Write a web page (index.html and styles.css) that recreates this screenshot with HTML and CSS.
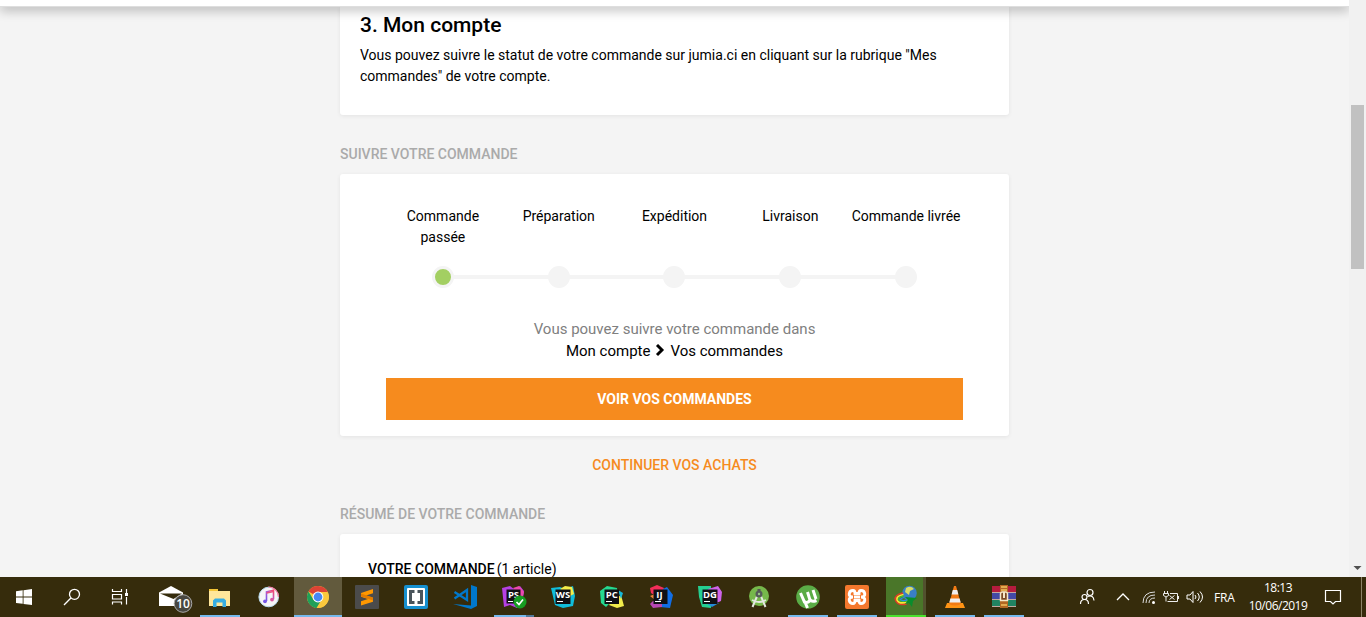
FILE: index.html
```html
<!DOCTYPE html>
<html lang="fr">
<head>
<meta charset="utf-8">
<title>Mon compte</title>
<link rel="stylesheet" href="styles.css">
</head>
<body>
<div class="screen">
  <div class="browser">
    <div class="page">
      <header class="topbar"></header>
      <main class="content">
        <section class="card account">
          <h2>3. Mon compte</h2>
          <p>Vous pouvez suivre le statut de votre commande sur jumia.ci en cliquant sur la rubrique "Mes<br>commandes" de votre compte.</p>
        </section>
        <h3 class="section-title">SUIVRE VOTRE COMMANDE</h3>
        <section class="card tracking">
          <ol class="steps">
            <li class="step active"><span class="label">Commande<br>passée</span><span class="dot"></span></li>
            <li class="step"><span class="label">Préparation</span><span class="dot"></span></li>
            <li class="step"><span class="label">Expédition</span><span class="dot"></span></li>
            <li class="step"><span class="label">Livraison</span><span class="dot"></span></li>
            <li class="step last"><span class="label">Commande livrée</span><span class="dot"></span></li>
          </ol>
          <p class="hint">Vous pouvez suivre votre commande dans</p>
          <p class="crumbs"><span>Mon compte</span><svg width="10" height="14" viewBox="0 0 10 14"><path d="M2 1l5 5-5 5" fill="none" stroke="#000" stroke-width="2.900"/></svg><span>Vos commandes</span></p>
          <a class="button">VOIR VOS COMMANDES</a>
        </section>
        <a class="continue">CONTINUER VOS ACHATS</a>
        <h3 class="section-title summary-title">RÉSUMÉ DE VOTRE COMMANDE</h3>
        <section class="card summary"><b>VOTRE COMMANDE</b><span>(1 article)</span></section>
      </main>
    </div>
    <div class="scrollbar"><div class="thumb"></div><svg class="arrow" width="17" height="17" viewBox="0 0 17 17"><path d="M4.500 6h8l-4 4z" fill="#505050"/></svg></div>
  </div>

  <footer class="taskbar">
    <div class="system">
      <div class="cell"><svg viewBox="0 0 24 24"><path fill="#fff" d="M4 6.300l6.700-1v6.200H4zM11.500 5.200L20 4v7.500h-8.500zM4 12.400h6.700v6.400L4 17.900zM11.500 12.400H20V20l-8.500-1.100z"/></svg></div>
      <div class="cell"><svg viewBox="0 0 24 24"><g fill="none" stroke="#fff" stroke-width="1.300"><circle cx="14.500" cy="9.300" r="5"/><path d="M10.900 13L4 20"/></g></svg></div>
      <div class="cell"><svg viewBox="0 0 24 24"><g fill="none" stroke="#fff" stroke-width="1.200"><path d="M4.500 4v2.500h9V4M4.500 19.500v-2.500h9v2.500M4.500 9.500h9v4.500h-9zM18.500 4v4M18.500 12v7.500"/></g><path fill="#fff" d="M17 8h3v3h-3z"/></svg></div>
    </div>
    <div class="apps">
      <div class="cell"><svg class="mail" viewBox="0 0 36 28"><path fill="#fff" d="M2 9.500L14 3l12 6.500V23H2z"/><path d="M3 10.500h22l-8.500 5.500z" fill="#342b0c"/><circle cx="26" cy="20.500" r="8.800" fill="#494740" stroke="#aaa" stroke-width="1"/><text x="26" y="24.800" text-anchor="middle" font-size="12" font-weight="600" fill="#fff">10</text></svg></div>
      <div class="cell open"><svg viewBox="0 0 24 24"><path fill="#f4c537" d="M1 4h9v2h12v4H1z"/><path fill="#ffe69a" d="M1 6h21v15H1z"/><path fill="#f4c537" d="M2 4h7v2H2z"/><path fill="#37ade2" d="M5 22v-6.500l2-2h9l2 2V22h-3.500v-4.500h-6V22z"/></svg></div>
      <div class="cell"><svg viewBox="0 0 24 24"><defs><linearGradient id="music" x1="0" y1="1" x2="1" y2="0"><stop stop-color="#7554e8"/><stop offset=".5" stop-color="#b05ad4"/><stop offset="1" stop-color="#fb4668"/></linearGradient></defs><circle cx="11.700" cy="12" r="9.800" fill="#f6f5f7" stroke="#b9dcf0" stroke-width="1"/><path d="M21.500 12a10 10 0 0 0-10-10" fill="none" stroke="#f57ca5" stroke-width="1.200"/><path d="M9.500 16V6.800l7-1.500v9" fill="none" stroke="url(#music)" stroke-width="1.600"/><path d="M9.500 8l7-1.500" stroke="#e75384" stroke-width="1.500"/><circle cx="8" cy="16.300" r="1.900" fill="#7657e7"/><circle cx="15" cy="14.600" r="1.900" fill="#d957a0"/></svg></div>
      <div class="cell current"><svg viewBox="0 0 24 24"><circle cx="12" cy="12" r="11" fill="#fbc83d"/><path fill="#dc4335" d="M12 12L2.500 6.500A11 11 0 0 1 21.700 7H12z"/><path fill="#20a05a" d="M2.500 6.500L7.600 15 12 17l-2 5.900A11 11 0 0 1 2.500 6.500z"/><path fill="#20a05a" d="M8 15l8-1-5.500 9-5-2z"/><path fill="#fbc83d" d="M16.700 8H22a11 11 0 0 1-11 15l5.500-9z"/><circle cx="12" cy="12" r="5.400" fill="#fff"/><circle cx="12" cy="12" r="4.400" fill="#4688f4"/></svg></div>
      <div class="cell"><svg viewBox="0 0 24 24"><rect width="24" height="24" rx="1" fill="#4b4b4b"/><path fill="#ff9800" d="M6 8l12-4v4.300l-7 2.300 7 2.200v4L6 20.500v-4.300l7-2.200-7-2.300z"/><path fill="#e27c00" d="M6 8.500l12 4v3L6 11.500z"/></svg></div>
      <div class="cell"><svg viewBox="0 0 24 24"><rect width="24" height="24" rx="2" fill="#1690d0"/><rect x="3" y="3" width="18" height="18" rx="1" fill="#fff"/><path d="M10.500 6.500h-4v11h4M13.500 6.500h4v11h-4" fill="none" stroke="#49545b" stroke-width="3"/></svg></div>
      <div class="cell"><svg viewBox="0 0 24 24"><path fill="#0078cb" d="M18 0l6 2v19l-6 3-18-5 18 1.500z"/><path d="M1.500 7L14 15V5L1.500 13.500" fill="none" stroke="#0078cb" stroke-width="2.300"/></svg></div>
      <div class="cell open split"><svg viewBox="0 0 24 24"><path fill="#b640e4" d="M0 3l8-2 4 3 6-3 4 5-2 13-5 4-7-3-6 2z"/><path fill="#ed48ae" d="M11 3l6-2 5 6-2 8z"/><rect x="4.500" y="4.500" width="14" height="14" fill="#101014"/><text class="ide" x="11.500" y="12.700">PS</text><path stroke="#fff" d="M6 16.500h5"/><circle cx="18" cy="17" r="6.500" fill="#179d21"/><path d="M14.500 17l2.500 2.500 4-5" fill="none" stroke="#fff" stroke-width="1.700"/></svg></div>
      <div class="cell"><svg viewBox="0 0 24 24"><path fill="#10bdda" d="M0 3l9-1 5 2 8-3 2 10-2 10-10 2-8-3z"/><path fill="#f5ee49" d="M9 4l5-3 7 1 2 7-4 2z"/><rect x="4.500" y="4.500" width="15" height="14.500" fill="#101014"/><text class="ide" x="12" y="12.700">WS</text><path stroke="#fff" d="M6 16.500h6"/></svg></div>
      <div class="cell"><svg viewBox="0 0 24 24"><path fill="#25d990" d="M0 6l7-5 10 2 2 17-10-1-3 3-5-4z"/><path fill="#f2ed4c" d="M11 17l10-7 3 11-7 2-8-3z"/><path fill="#16b8da" d="M18 5l5 3-2 6z"/><rect x="4.500" y="4.500" width="14.500" height="14.500" fill="#101014"/><text class="ide" x="11.700" y="12.700">PC</text><path stroke="#fff" d="M6 16.500h6"/></svg></div>
      <div class="cell"><svg viewBox="0 0 24 24"><path fill="#f32e59" d="M1 3l7-3 7 3-4 11-9-6z"/><path fill="#116ee5" d="M14 4l4-2 6 8-3 13-10-1z"/><path fill="#b747b2" d="M4 16h9v6l-9 1-3-4z"/><path fill="#ef853a" d="M1 11l5-2v6z"/><rect x="4.500" y="4.500" width="14" height="14.500" fill="#101014"/><text class="ide" x="10.500" y="12.700">IJ</text><path stroke="#fff" d="M6 16.500h6"/></svg></div>
      <div class="cell"><svg viewBox="0 0 24 24"><path fill="#25cf91" d="M0 1h13v22l-9-1L1 12z"/><path fill="#ce63eb" d="M10 4l10-3 4 6-1 9-7 3z"/><path fill="#258cda" d="M8 18h13l-7 4z"/><rect x="4.500" y="4.500" width="15" height="14.500" fill="#101014"/><text class="ide" x="12" y="12.700">DG</text><path stroke="#fff" d="M6 16.500h6"/></svg></div>
      <div class="cell"><svg viewBox="0 0 24 24"><circle cx="12" cy="11" r="10" fill="#76b84b"/><path d="M11 9L5.500 22M13 9l5.500 13M5 15q7 4 14 0" fill="none" stroke="#e4e8e1" stroke-width="2"/><path d="M12 4v3" stroke="#555" stroke-width="3"/><circle cx="12" cy="9" r="3.500" fill="#555c59"/><circle cx="12" cy="9" r="1.200" fill="#9bc687"/></svg></div>
      <div class="cell open"><svg viewBox="0 0 24 24"><circle cx="12" cy="12" r="11.800" fill="#5aac46"/><path d="M4.500 8l4 9q3.500 1.500 5.500-2l-2.500-8M14 14.500q1.500 3 6.500 1M8.500 16l3 7M17 5l3 9" fill="none" stroke="#fff" stroke-width="3"/></svg></div>
      <div class="cell open"><svg viewBox="0 0 24 24"><rect width="24" height="24" rx="2" fill="#f4782d"/><path d="M9 12h6M8 12C2 12 4 5.500 8 5.500q2 0 2 3h4q0-3 2-3c4 0 6 6.500 0 6.500c6 0 4 6.500 0 6.500q-2 0-2-3h-4q0 3-2 3c-4 0-6-6.500 0-6.500" fill="none" stroke="#fff" stroke-width="2.900"/></svg></div>
      <div class="cell open download"><svg viewBox="0 0 24 24"><circle cx="15.500" cy="8" r="7.300" fill="#397fc6"/><path fill="#d6dc69" d="M12 3q5-3 8 1l-4 2-1 4-4-3z"/><path d="M9 8Q0 10 1.500 15q2 6 11 4" fill="none" stroke="#df3b28" stroke-width="1.700"/><path d="M9.500 9.500Q2 11 3 14.800q2 4.500 10 2.500" fill="none" stroke="#ffe333" stroke-width="1.700"/><path d="M10 11Q4 12 4.800 14.500Q7 17.500 14 15.500" fill="none" stroke="#39bd3c" stroke-width="1.500"/><path d="M10 12.500q-5 1.500-3 2.500q3 1.500 8-1" fill="none" stroke="#3285e4" stroke-width="1.300"/><path fill="#098d2d" d="M11 12l12 1-4 3-1 6-3-4-4 1 3-4z"/></svg></div>
      <div class="cell open"><svg viewBox="0 0 24 24"><path fill="#ff9314" d="M4 18h16l2 5H2z"/><path fill="#f37b15" d="M11 1h2l5 18q-6 3-12 0z"/><path fill="#f0eff0" d="M9.800 5h4.400l1.200 4.500H8.600zM7.400 13.500h9.200l1.100 4H6.300z"/></svg></div>
      <div class="cell open"><svg viewBox="0 0 24 24"><path fill="#b61c3e" d="M0 1h24v7H0z"/><path fill="#434aa6" d="M0 8h24v7H0z"/><path fill="#218361" d="M0 15h24v7H0z"/><path stroke="#c3a9a0" d="M0 7.500h24M0 14.500h24M0 21.500h24"/><path fill="#b26722" d="M8 0h8v23H8z"/><path d="M9 2h6M9 5h6M9 20h6" stroke="#f4c260" stroke-width="1.300"/><path d="M8.500 15.500V9q0-2 2-2h3q2 0 2 2v6.500z" fill="#7c4923" stroke="#f6e8c8" stroke-width="1.500"/><path fill="#f6e8c8" d="M11 7h2v6h-2z"/></svg></div>
    </div>
    <div class="tray">
      <svg width="18" height="18" viewBox="0 0 18 18"><g fill="none" stroke="#fff" stroke-width="1.200"><circle cx="12" cy="4.500" r="3"/><circle cx="6.500" cy="9" r="2.500"/><path d="M2.500 16q0-4.500 4-4.500t4 4.500M9.500 8.500q6-2 6.500 4"/></g></svg>
      <svg class="up" width="14" height="14" viewBox="0 0 14 14"><path d="M1 10l6-6 6 6" fill="none" stroke="#fff" stroke-width="1.300"/></svg>
      <svg class="wifi" width="14" height="16" viewBox="0 0 14 16"><g fill="none" stroke="#ddd"><path d="M1 14Q1 3 13 3M4 14q0-8 9-8M7 14q0-5 6-5"/></g><circle cx="11.500" cy="13.500" r="1.500" fill="#fff"/></svg>
      <svg class="battery" width="17" height="14" viewBox="0 0 17 14"><g fill="none" stroke="#eee"><path d="M2.500 1v2M5.500 1v2M1.500 3.500h5v2q-2.500 3-5 0zM4 7v4.500M8 3.500h7.500v8H5.500M16.500 6v3M7.500 5.500l5 4M12.500 5.500l-5 4"/></g></svg>
      <svg class="sound" width="18" height="14" viewBox="0 0 18 14"><g fill="none" stroke="#fff"><path d="M1 5h3l3-3.500v11L4 9H1zM9 5q2 2 0 4M11.500 3q3.500 4 0 8M14 1.500q5 5.500 0 11"/></g></svg>
      <span class="lang">FRA</span>
      <div class="clock"><span>18:13</span><span>10/06/2019</span></div>
      <svg class="notice" width="18" height="18" viewBox="0 0 18 18"><path d="M1.500 2.500h15v11h-5L9 16l-2.500-2.500h-5z" fill="none" stroke="#fff" stroke-width="1.200"/></svg>
      <div class="desktop"></div>
    </div>
  </footer>
</div>
</body>
</html>
```
FILE: styles.css
```css
* { box-sizing: border-box; }
body { margin: 0; font-family: Roboto, sans-serif; color: #000; }
h2, h3, p, ol { margin: 0; padding: 0; }
.screen { display: flex; flex-direction: column; width: 1366px; height: 617px; overflow: hidden; }
.browser { display: flex; height: 577px; }
.page { width: 1349px; height: 577px; overflow: hidden; background: #f4f4f4; }
.topbar { height: 6px; background: #fff; position: relative; box-shadow: 0 1px 0 #dedede, 0 3px 12px rgba(0, 0, 0, .4); }
.content { width: 669px; margin: 0 auto; }
.card { background: #fff; border-radius: 3px; box-shadow: 0 1px 4px rgba(0, 0, 0, .07); }
.account { height: 109px; padding: 7px 20px; border-radius: 0 0 3px 3px; }
.account h2 { font-size: 21px; font-weight: 500; line-height: 24px; }
.account p { margin-top: 8px; font-size: 14px; line-height: 21px; white-space: nowrap; }
.section-title { height: 20px; margin: 29px 0 10px; font-size: 14px; line-height: 20px; font-weight: 500; color: #aaa; }
.tracking { height: 262px; padding: 32px 46px 0; text-align: center; }
.steps { display: grid; grid-template-columns: repeat(5, 1fr); margin: 0 -1px; list-style: none; }
.step { display: flex; flex-direction: column; align-items: center; position: relative; }
.label { height: 42px; font-size: 14px; line-height: 21px; white-space: nowrap; }
.dot { width: 22px; height: 22px; margin-top: 18px; border-radius: 50%; background: #f4f4f4; border: 3px solid #f4f4f4; position: relative; z-index: 1; }
.active .dot { background: #a3cf62; }
.step:not(.last)::after { content: ""; position: absolute; top: 69px; left: 50%; width: 100%; height: 4px; background: #f4f4f4; }
.hint { margin-top: 30px; font-size: 15px; line-height: 22px; color: #808080; }
.crumbs { display: flex; align-items: center; justify-content: center; gap: 5px; font-size: 15px; line-height: 22px; }
.button { display: block; height: 42px; margin-top: 16px; background: #f68b1e; color: #fff; font-size: 14px; font-weight: 700; line-height: 42px; }
.continue { display: block; margin-top: 19px; height: 20px; text-align: center; font-size: 14px; font-weight: 500; line-height: 20px; color: #f68b1e; }
.summary { display: flex; gap: 2px; height: 80px; padding: 25px 28px; font-size: 14px; line-height: 20px; }
.summary b { font-weight: 500; }
.scrollbar { display: flex; flex-direction: column; justify-content: space-between; width: 17px; background: #f1f1f1; }
.thumb { width: 13px; height: 164px; margin: 105px 2px 0; background: #c1c1c1; }
.arrow { display: block; }
.taskbar { display: flex; height: 40px; background: #362c0c; color: #fff; font-family: "Open Sans", sans-serif; }
.system, .apps { display: flex; }
.apps { gap: 1px; margin-left: 3px; }
.cell { display: flex; align-items: center; justify-content: center; width: 48px; height: 40px; }
.cell svg { width: 24px; height: 24px; overflow: visible; }
.cell .mail { width: 36px; height: 28px; margin-left: 7px; }
.open { background: linear-gradient(#76b9ed, #76b9ed) center bottom / 40px 2px no-repeat; }
.split { background: linear-gradient(90deg, #76b9ed 80%, #52799a 80%) center bottom / 40px 2px no-repeat; }
.current { background: #625a3d; border-bottom: 2px solid #76b9ed; padding-top: 2px; }
.download { background: linear-gradient(#4be22d, #4be22d) center bottom / 40px 2px no-repeat, linear-gradient(90deg, #4a7629 92%, #52512e 92%) center / 40px 40px no-repeat; }
.ide { font: 700 9.5px "Open Sans", sans-serif; fill: #fff; text-anchor: middle; }
.tray { display: flex; align-items: center; margin-left: 50px; flex: 1; }
.tray svg { flex: none; }
.up { margin-left: 20px; }
.wifi { margin-left: 12px; }
.battery { margin-left: 6px; }
.sound { margin-left: 7px; }
.lang { margin-left: 10px; width: 23px; font-size: 12px; letter-spacing: -.2px; }
.clock { display: flex; flex-direction: column; width: 60px; margin-left: 11px; text-align: center; font-size: 12px; line-height: 18px; letter-spacing: -.5px; white-space: nowrap; }
.notice { margin-left: 16px; }
.desktop { margin-left: auto; margin-right: 4px; width: 1px; height: 40px; background: #8b8468; }
```
